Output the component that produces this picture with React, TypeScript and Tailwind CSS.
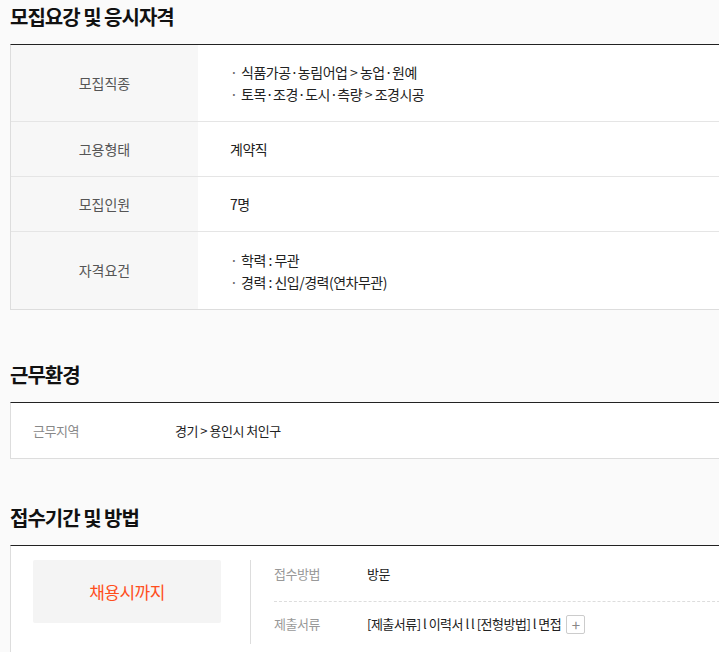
export default function App() {
  const f = { fontFamily: '"Noto Sans CJK KR","Noto Sans",sans-serif' };
  const Row = ({ label, h, children }: any) => (
    <div className="flex border-b border-[#e5e5e5] last:border-b-0" style={{ height: h }}>
      <div className="w-[187px] bg-[#f7f7f7] flex items-center justify-center text-[14px] text-[#555]">{label}</div>
      <div className="flex-1 bg-white flex flex-col justify-center pl-[32px] text-[14px] text-[#222] tracking-[-0.5px] leading-[22px]">{children}</div>
    </div>
  );
  const B = ({ t }: any) => <div className="flex"><span className="w-[10px] text-[#666]">·</span><span className="ml-[1px]">{t}</span></div>;
  return (
    <div className="w-[719px] h-[652px] bg-[#fafafa] overflow-hidden pl-[10px]" style={f}>
      <h2 className="text-[20px] font-bold text-[#111] tracking-[-1px] h-[44px] pt-[2px]">모집요강 및 응시자격</h2>
      <div className="border-t border-t-[#222] border-l border-b border-[#ddd] w-[720px]">
        <Row label="모집직종" h={77}><B t="식품가공·농림어업 > 농업·원예" /><B t="토목·조경·도시·측량 > 조경시공" /></Row>
        <Row label="고용형태" h={55}>계약직</Row>
        <Row label="모집인원" h={55}>7명</Row>
        <Row label="자격요건" h={77}><B t="학력 : 무관" /><B t="경력 : 신입/경력(연차무관)" /></Row>
      </div>
      <h2 className="text-[20px] font-bold text-[#111] tracking-[-1px] mt-[50px] h-[42px]">근무환경</h2>
      <div className="border-t border-t-[#222] border-l border-b border-[#ddd] bg-white w-[720px] h-[57px] flex items-center text-[13px] tracking-[-0.5px]">
        <span className="w-[164px] pl-[22px] text-[#888]">근무지역</span>
        <span className="text-[#222]">경기 &gt; 용인시 처인구</span>
      </div>
      <h2 className="text-[20px] font-bold text-[#111] tracking-[-1px] mt-[42px] h-[44px] pt-[2px]">접수기간 및 방법</h2>
      <div className="border-t border-t-[#222] border-l border-[#ddd] bg-white w-[720px] h-[120px] flex pt-[14px]">
        <div className="ml-[22px] w-[188px] h-[63px] bg-[#f4f4f4] rounded-[2px] flex items-center justify-center text-[17px] text-[#ff4e1c] tracking-[-0.5px]">채용시까지</div>
        <div className="ml-[29px] border-l border-[#ddd] h-[84px] pl-[23px] flex-1 text-[13px] tracking-[-0.5px]">
          <div className="flex h-[42px] items-start pt-[4px] border-b border-dashed border-[#ddd]">
            <span className="w-[93px] text-[#999]">접수방법</span><span className="text-[#222]">방문</span>
          </div>
          <div className="flex items-center h-[42px] pt-[2px]">
            <span className="w-[93px] text-[#999]">제출서류</span>
            <span className="text-[#222]">[제출서류] l 이력서 l l [전형방법] l 면접</span>
            <span className="ml-[5px] w-[19px] h-[19px] border border-[#ccc] rounded-[2px] flex items-center justify-center text-[#888] text-[15px] leading-none">+</span>
          </div>
        </div>
      </div>
    </div>
  );
}
